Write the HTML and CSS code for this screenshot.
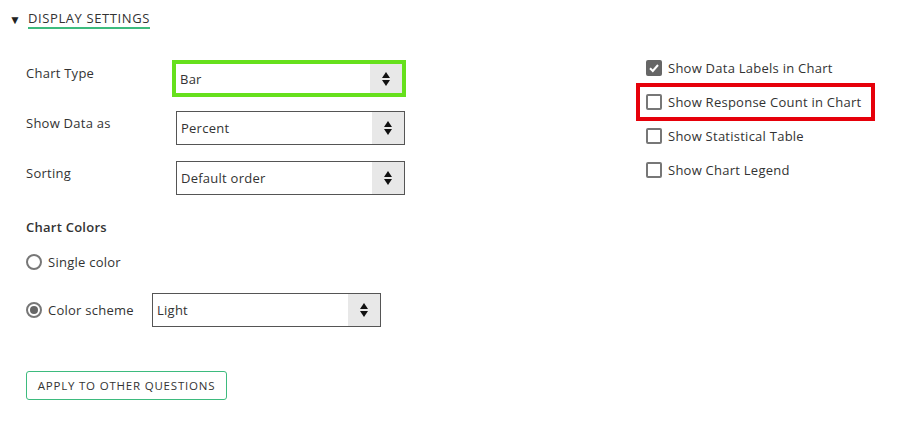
FILE: index.html
```html
<!DOCTYPE html>
<html lang="en">
<head>
  <meta charset="UTF-8" />
  <title>Display Settings</title>
  <link rel="stylesheet" href="styles.css">
</head>
<body>
  <div class="section-head">
    <span class="caret">&#9660;</span>
    <span class="section-title">DISPLAY SETTINGS</span>
  </div>

  <div class="settings">
    <div class="left-col">
      <div class="field first">
        <label>Chart Type</label>
        <div class="highlight-green">
          <div class="select inner">
            <span class="value">Bar</span>
            <span class="arrows"><i class="up"></i><i class="down"></i></span>
          </div>
        </div>
      </div>
      <div class="field">
        <label>Show Data as</label>
        <div class="select">
          <span class="value">Percent</span>
          <span class="arrows"><i class="up"></i><i class="down"></i></span>
        </div>
      </div>
      <div class="field">
        <label>Sorting</label>
        <div class="select">
          <span class="value">Default order</span>
          <span class="arrows"><i class="up"></i><i class="down"></i></span>
        </div>
      </div>

      <h4 class="group-title">Chart Colors</h4>
      <div class="radio-row single">
        <span class="radio"></span>
        <span>Single color</span>
      </div>
      <div class="radio-row scheme">
        <span class="radio checked"></span>
        <span class="radio-label">Color scheme</span>
        <div class="select">
          <span class="value">Light</span>
          <span class="arrows"><i class="up"></i><i class="down"></i></span>
        </div>
      </div>

      <button class="apply-btn">APPLY TO OTHER QUESTIONS</button>
    </div>

    <div class="right-col">
      <div class="check-row">
        <span class="checkbox checked">
          <svg width="12" height="12" viewBox="0 0 12 12"><path d="M2 6.2 L4.8 9 L10 3" fill="none" stroke="#fff" stroke-width="2"/></svg>
        </span>
        <span>Show Data Labels in Chart</span>
      </div>
      <div class="check-row highlight-red">
        <span class="checkbox"></span>
        <span>Show Response Count in Chart</span>
      </div>
      <div class="check-row">
        <span class="checkbox"></span>
        <span>Show Statistical Table</span>
      </div>
      <div class="check-row">
        <span class="checkbox"></span>
        <span>Show Chart Legend</span>
      </div>
    </div>
  </div>
</body>
</html>
```

FILE: styles.css
```css
body {
  font-family: "Open Sans", Arial, sans-serif;
  font-size: 13px;
  letter-spacing: 0.25px;
  color: #333;
  background: #fff;
  margin: 0;
}
.section-head {
  display: flex;
  align-items: center;
  height: 26px;
  padding: 6px 0 0 9px;
}
.caret {
  font-size: 12px;
  color: #222;
  width: 19px;
}
.section-title {
  font-size: 13px;
  letter-spacing: 0.6px;
  line-height: 18px;
  border-bottom: 2px solid #3dbb7e;
  color: #333;
}
.settings {
  display: flex;
  padding-left: 26px;
}
.left-col {
  width: 610px;
}
.field {
  display: flex;
  align-items: flex-start;
  height: 34px;
  margin-bottom: 16px;
}
.field.first {
  margin-top: 28px;
  height: 37px;
  margin-bottom: 14px;
}
.field label {
  width: 150px;
  line-height: 18px;
  padding-top: 3px;
}
.field.first label {
  padding-top: 4px;
}
.highlight-green {
  margin-left: -4px;
  border: 4px solid #66e01c;
  display: flex;
}
.select {
  display: flex;
  width: 227px;
  height: 32px;
  border: 1px solid #555;
  background: #fff;
}
.select.inner {
  border: none;
  width: 226px;
  height: 29px;
}
.select .value {
  flex: 1;
  padding-left: 4px;
  line-height: 33px;
}
.select.inner .value {
  line-height: 31px;
}
.arrows {
  width: 32px;
  background: #e8e8e8;
  display: flex;
  flex-direction: column;
  align-items: center;
  justify-content: center;
  gap: 2px;
}
.arrows i {
  width: 0;
  height: 0;
  border-left: 4px solid transparent;
  border-right: 4px solid transparent;
}
.arrows .up { border-bottom: 6px solid #111; }
.arrows .down { border-top: 6px solid #111; }
.group-title {
  font-size: 13px;
  font-weight: 600;
  margin: 23px 0 0;
  line-height: 18px;
}
.radio-row {
  display: flex;
  align-items: center;
}
.radio-row.single {
  margin-top: 17px;
}
.radio-row.scheme {
  margin-top: 22px;
}
.radio {
  width: 12px;
  height: 12px;
  border: 2px solid #777;
  border-radius: 50%;
  margin-right: 6px;
  position: relative;
}
.radio.checked::after {
  content: "";
  position: absolute;
  left: 2px;
  top: 2px;
  width: 8px;
  height: 8px;
  border-radius: 50%;
  background: #666;
}
.radio-label {
  width: 104px;
}
.apply-btn {
  margin-top: 44px;
  font-family: inherit;
  font-size: 11.5px;
  letter-spacing: 0.8px;
  color: #333;
  background: #fff;
  border: 1px solid #3dbb7e;
  border-radius: 3px;
  width: 201px;
  height: 29px;
  padding: 0;
}
.right-col {
  padding-top: 19px;
}
.check-row {
  display: flex;
  align-items: center;
  height: 34px;
  padding-left: 10px;
}
.checkbox {
  width: 12px;
  height: 12px;
  border: 2px solid #777;
  border-radius: 2px;
  margin-right: 6px;
  display: flex;
  align-items: center;
  justify-content: center;
}
.checkbox.checked {
  background: #666;
  border-color: #666;
}
.highlight-red {
  border: 4px solid #e6000a;
  width: 225px;
  height: 30px;
  padding-left: 6px;
  margin: -2px 0;
}
```
